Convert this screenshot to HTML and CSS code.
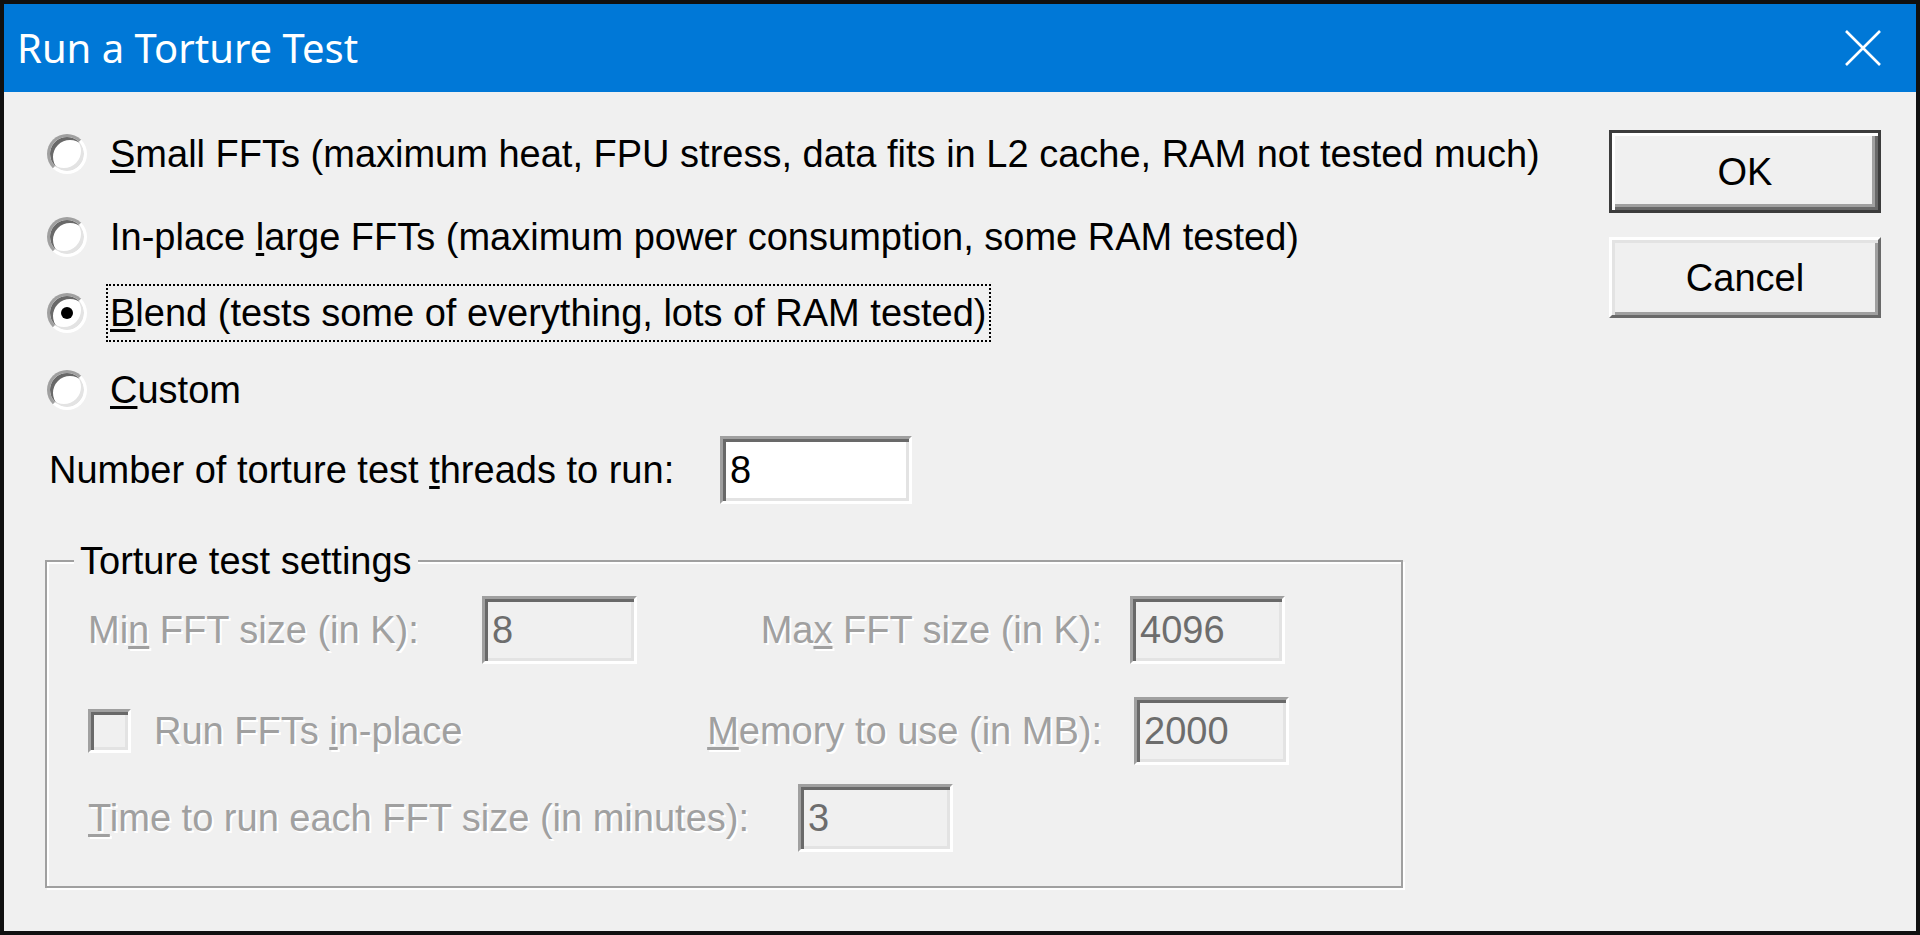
FILE: index.html
```html
<!DOCTYPE html>
<html lang="en">
<head>
<meta charset="utf-8">
<title>Run a Torture Test</title>
<link rel="stylesheet" href="styles.css">
</head>
<body>
<div class="window">
  <div class="titlebar">
    <span class="title">Run a Torture Test</span>
    <span class="close"><svg width="36" height="36" viewBox="0 0 36 36"><path d="M1 1 L35 35 M35 1 L1 35" stroke="#fff" stroke-width="2.6" fill="none"/></svg></span>
  </div>
  <div class="content">
    <div class="main">
      <div class="opt o1"><span class="radio"></span><span class="lbl"><u>S</u>mall FFTs (maximum heat, FPU stress, data fits in L2 cache, RAM not tested much)</span></div>
      <div class="opt o2"><span class="radio"></span><span class="lbl">In-place <u>l</u>arge FFTs (maximum power consumption, some RAM tested)</span></div>
      <div class="opt o3"><span class="radio checked"></span><span class="lbl focus"><u>B</u>lend (tests some of everything, lots of RAM tested)</span></div>
      <div class="opt o4"><span class="radio"></span><span class="lbl"><u>C</u>ustom</span></div>
      <div class="threads"><span class="tl">Number of torture test <u>t</u>hreads to run:</span><span class="edit thr">8</span></div>
      <fieldset class="group">
        <legend>Torture test settings</legend>
        <div class="gbody">
          <div class="grow">
            <span class="dl c1">Mi<u>n</u> FFT size (in K):</span>
            <span class="edit dis s">8</span>
            <span class="dl c2">Ma<u>x</u> FFT size (in K):</span>
            <span class="edit dis s">4096</span>
          </div>
          <div class="grow r2">
            <span class="chkcell"><span class="chk"></span><span class="dl">Run FFTs <u>i</u>n-place</span></span>
            <span class="dl c2 m2"><u>M</u>emory to use (in MB):</span>
            <span class="edit dis s">2000</span>
          </div>
          <div class="grow r3">
            <span class="dl c3"><u>T</u>ime to run each FFT size (in minutes):</span>
            <span class="edit dis s">3</span>
          </div>
        </div>
      </fieldset>
    </div>
    <div class="side">
      <div class="btn ok">OK</div>
      <div class="btn cancel">Cancel</div>
    </div>
  </div>
</div>
</body>
</html>
```
FILE: styles.css
```css
* { box-sizing: border-box; }
html, body { margin: 0; padding: 0; }
body {
  width: 1920px;
  height: 935px;
  overflow: hidden;
  background: #000;
  font-family: "Liberation Sans", Arial, sans-serif;
  font-size: 38px;
  line-height: 44px;
  color: #000;
}
u { text-decoration-thickness: 3px; text-underline-offset: 3px; }

.window {
  width: 1920px;
  height: 935px;
  border: 4px solid #101010;
  background: #f0f0f0;
  display: flex;
  flex-direction: column;
}
.titlebar {
  flex: 0 0 88px;
  background: #0078d7;
  display: flex;
  align-items: center;
  justify-content: space-between;
  padding: 0 35px 0 13px;
}
.title {
  font-family: "Noto Sans", "Open Sans", sans-serif;
  font-size: 40px;
  line-height: 1;
  color: #fff;
}
.close { width: 36px; height: 36px; display: block; }
.close svg { display: block; }

.content { flex: 1; display: flex; }
.main { flex: 1; padding: 40px 0 0 41px; }
.side {
  display: flex;
  flex-direction: column;
  gap: 24px;
  padding: 38px 35px 0 0;
}

.opt { height: 44px; display: flex; align-items: center; padding-left: 2px; }
.o2 { margin-top: 39px; }
.o3 { margin-top: 32px; }
.o4 { margin-top: 33px; }
.radio {
  position: relative;
  flex: 0 0 40px;
  width: 40px;
  height: 40px;
  border-radius: 50%;
  border: 3px solid;
  border-color: #a0a0a0 #fff #fff #a0a0a0;
  background: #fff;
  box-shadow: inset 3px 3px 0 #696969, inset -3px -3px 0 #e3e3e3;
  margin-right: 19px;
}
.radio.checked::after {
  content: "";
  position: absolute;
  left: 50%;
  top: 50%;
  width: 12px;
  height: 12px;
  margin: -6px 0 0 -6px;
  border-radius: 50%;
  background: #000;
}
.lbl {
  white-space: nowrap;
  border: 2px dotted transparent;
  padding: 5px 2px;
}
.lbl.focus { border-color: #000; }

.threads { height: 68px; margin-top: 24px; display: flex; align-items: center; padding-left: 4px; }
.tl { flex: 0 0 671px; white-space: nowrap; }

.edit {
  height: 68px;
  display: flex;
  align-items: center;
  border: 3px solid;
  border-color: #a0a0a0 #fff #fff #a0a0a0;
  box-shadow: inset 3px 3px 0 #696969, inset -3px -3px 0 #e3e3e3;
  background: #fff;
  padding: 0 0 0 7px;
  line-height: 1;
}
.edit.thr { width: 192px; }
.edit.s { width: 155px; flex: 0 0 155px; }
.edit.dis { background: #f0f0f0; color: #6d6d6d; }

.group {
  margin: 37px 0 0 0;
  width: 1358px;
  padding: 0;
  border: 2px solid #a0a0a0;
  box-shadow: inset 2px 2px 0 #fff, 2px 2px 0 #fff;
  min-inline-size: 0;
}
.group legend {
  margin-left: 27px;
  padding: 0 6px;
  line-height: 40px;
  background: #f0f0f0;
}
.gbody { padding: 15px 0 34px 41px; }
.grow { display: flex; align-items: center; height: 68px; }
.grow.r2 { margin-top: 33px; }
.grow.r3 { margin-top: 19px; }
.dl {
  color: #a0a0a0;
  text-shadow: 2px 2px 0 #fff;
  white-space: nowrap;
}
.c1 { flex: 0 0 394px; }
.c2 { flex: 0 0 465px; text-align: right; margin-right: 28px; }
.c2.m2 { margin-right: 32px; }
.c3 { flex: 0 0 710px; }
.chkcell { flex: 0 0 549px; display: flex; align-items: center; }
.chk {
  flex: 0 0 43px;
  width: 43px;
  height: 44px;
  border: 3px solid;
  border-color: #a0a0a0 #fff #fff #a0a0a0;
  box-shadow: inset 3px 3px 0 #696969, inset -3px -3px 0 #e3e3e3;
  background: #f0f0f0;
  margin-right: 23px;
}

.btn {
  width: 272px;
  display: flex;
  align-items: center;
  justify-content: center;
  background: #f0f0f0;
}
.btn.ok {
  height: 83px;
  border: 3px solid #3c3c3c;
  box-shadow: inset 3px 3px 0 #fff, inset -3px -3px 0 #696969, inset -6px -6px 0 #a0a0a0;
}
.btn.cancel {
  height: 81px;
  border: 3px solid;
  border-color: #fff #696969 #696969 #fff;
  box-shadow: inset 3px 3px 0 #e3e3e3, inset -3px -3px 0 #a0a0a0;
}
```
